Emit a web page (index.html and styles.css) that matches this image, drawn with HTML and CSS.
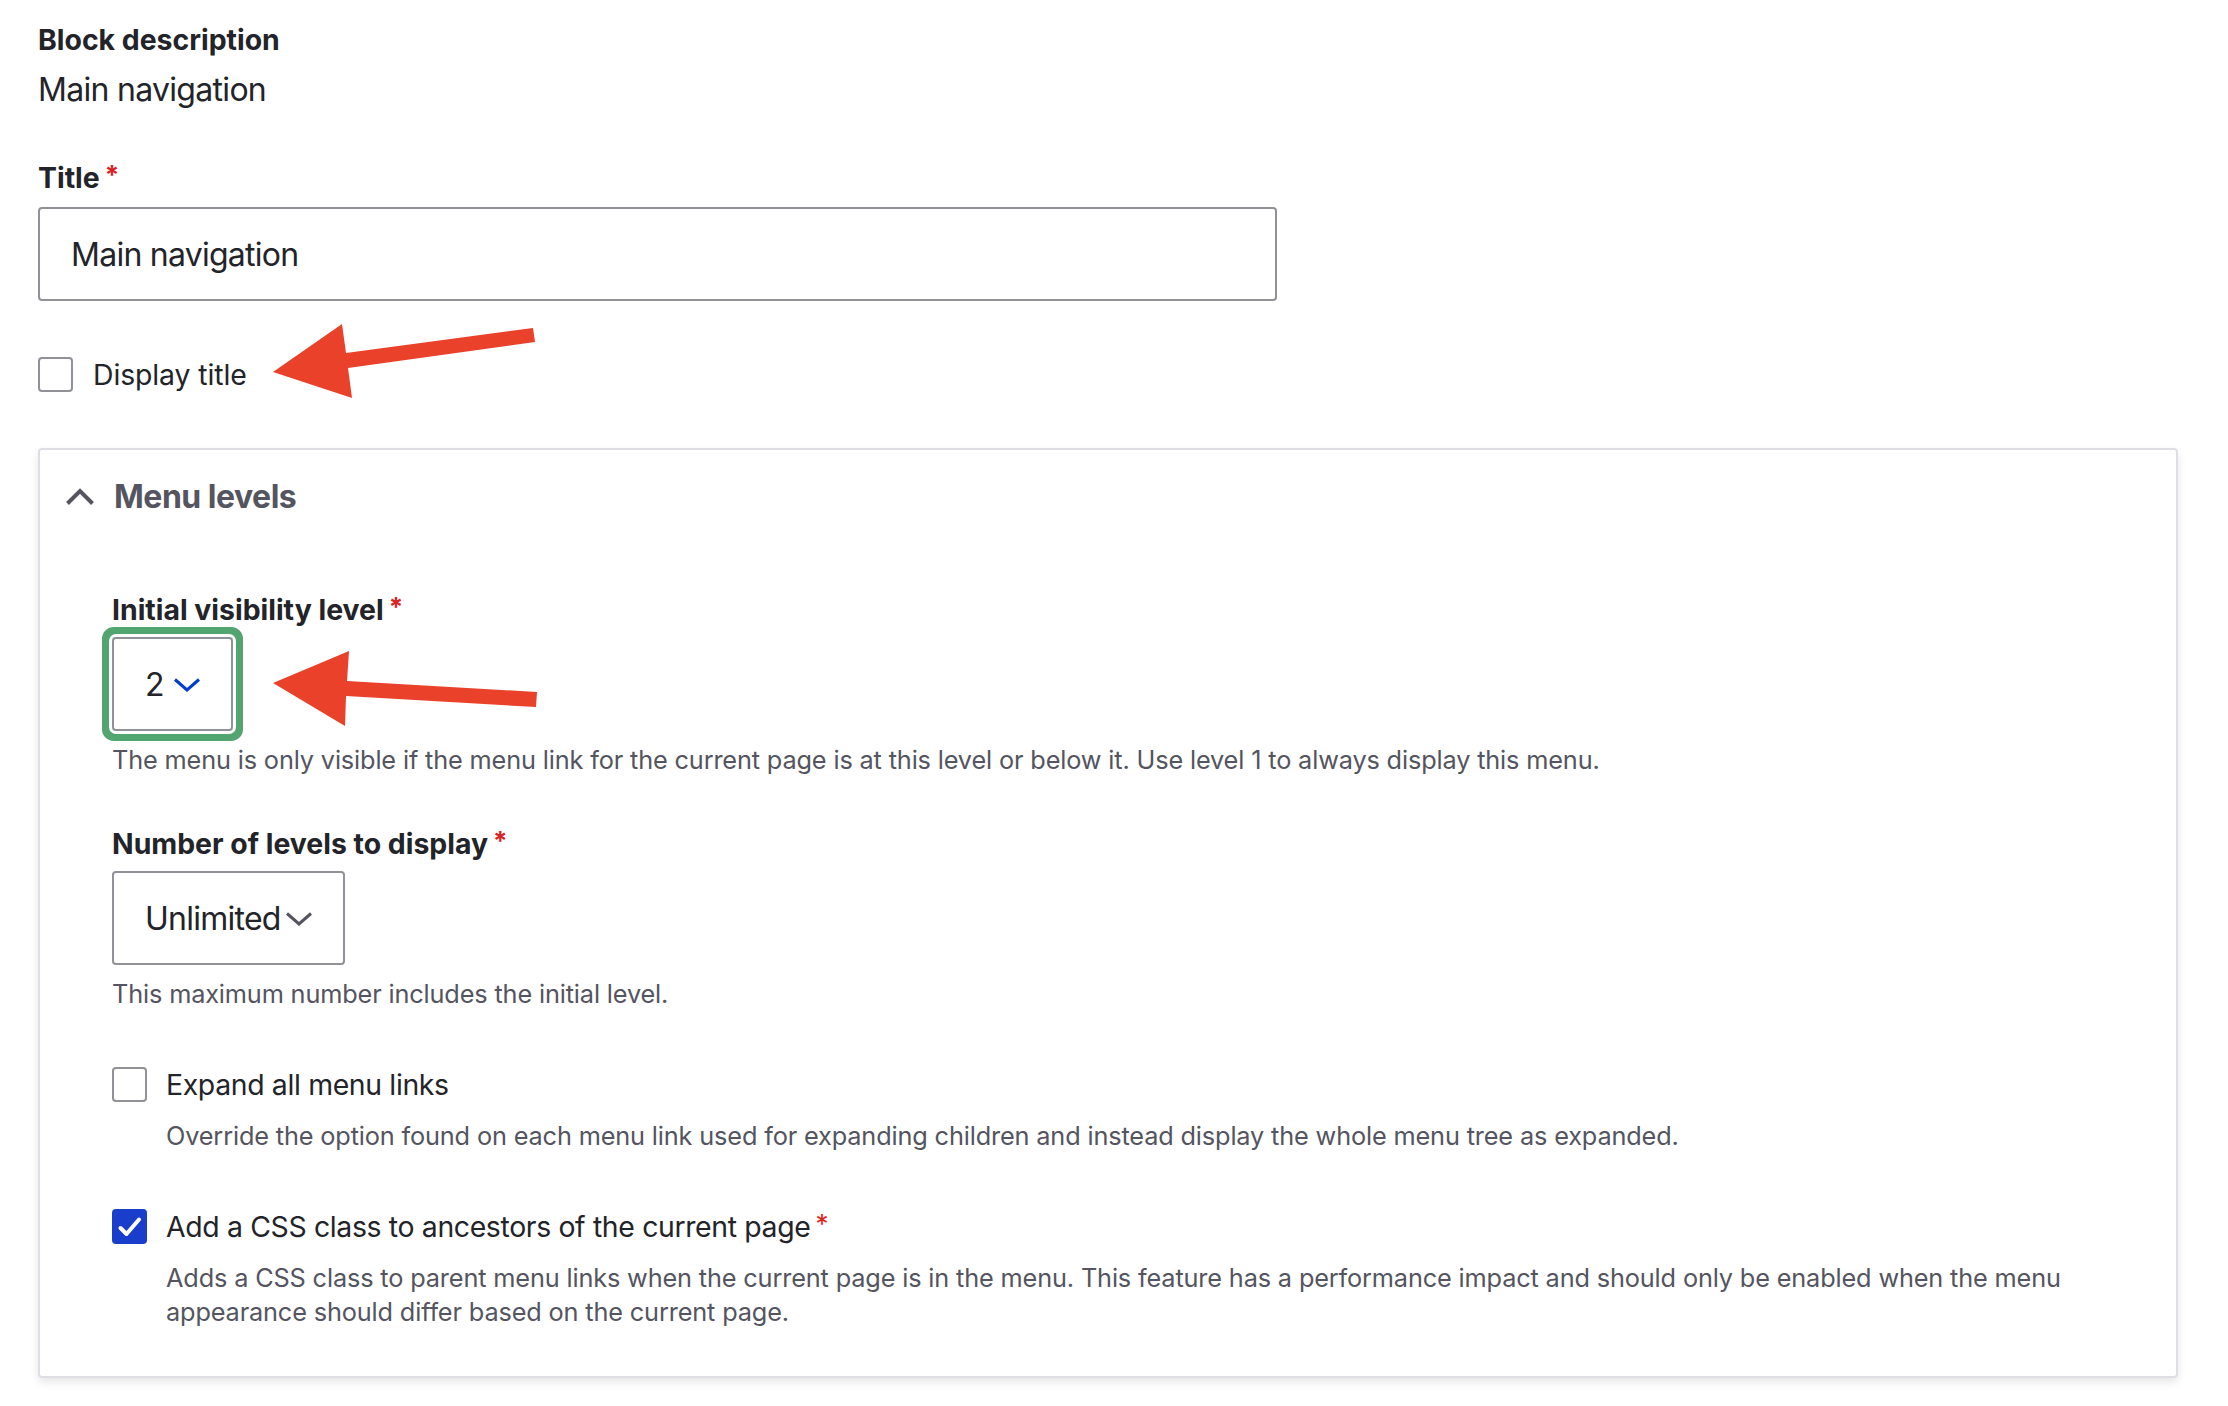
FILE: index.html
```html
<!DOCTYPE html>
<html lang="en">
<head>
  <meta charset="UTF-8" />
  <meta name="viewport" content="width=device-width, initial-scale=1" />
  <title>Configure block</title>
  <link rel="stylesheet" href="styles.css">
</head>
<body>
  <div class="page">

    <div class="form-item">
      <div class="form-item__label">Block description</div>
      <div class="form-item__value">Main navigation</div>
    </div>

    <div class="form-item form-item--title">
      <label class="form-item__label" for="title">Title<span class="required">*</span></label>
      <input type="text" class="form-text" id="title" value="Main navigation" />
    </div>

    <div class="check check--top">
      <span class="check__box"></span>
      <span class="check__label">Display title</span>
    </div>

    <details class="details" open>
      <summary class="details__summary">
        <svg class="details__arrow" width="28" height="18" viewBox="0 0 28 18">
          <path d="M1.5 15.5 L14 3 L26.5 15.5" fill="none" stroke="#545560" stroke-width="4" />
        </svg>
        Menu levels
      </summary>

      <div class="details__content">
        <div class="form-item form-item--first">
          <div class="form-item__label">Initial visibility level<span class="required">*</span></div>
          <div class="select select--focus">
            <span>2</span>
            <svg width="26" height="14" viewBox="0 0 26 14">
              <path d="M1 1.5 L13 12 L25 1.5" fill="none" stroke="#003ecc" stroke-width="3" />
            </svg>
          </div>
          <div class="form-item__description">The menu is only visible if the menu link for the current page is at this level or below it. Use level 1 to always display this menu.</div>
        </div>

        <div class="form-item form-item--next">
          <div class="form-item__label">Number of levels to display<span class="required">*</span></div>
          <div class="select select--wide">
            <span>Unlimited</span>
            <svg width="26" height="14" viewBox="0 0 26 14">
              <path d="M1 1.5 L13 12 L25 1.5" fill="none" stroke="#545560" stroke-width="3" />
            </svg>
          </div>
          <div class="form-item__description">This maximum number includes the initial level.</div>
        </div>

        <div class="check">
          <span class="check__box"></span>
          <span class="check__label">Expand all menu links</span>
        </div>
        <div class="form-item__description check__description">Override the option found on each menu link used for expanding children and instead display the whole menu tree as expanded.</div>

        <div class="check">
          <span class="check__box check__box--checked">
            <svg width="35" height="35" viewBox="0 0 35 35">
              <path d="M8.5 19 L14.5 25 L27 10.5" fill="none" stroke="#fff" stroke-width="4" stroke-linecap="round" stroke-linejoin="round" />
            </svg>
          </span>
          <span class="check__label">Add a CSS class to ancestors of the current page<span class="required">*</span></span>
        </div>
        <div class="form-item__description check__description">Adds a CSS class to parent menu links when the current page is in the menu. This feature has a performance impact and should only be enabled when the menu appearance should differ based on the current page.</div>
      </div>
    </details>

    <!-- red pointers drawn on top of the form -->
    <svg class="pointers" width="2228" height="1406" viewBox="0 0 2228 1406">
      <polygon points="273,372 342,324 346,353 533,328 535,342 348,368 352,398" fill="#e9412a" />
      <polygon points="273,683 349,651 347,681 537,692 536,707 346,696 345,726" fill="#e9412a" />
    </svg>
  </div>
</body>
</html>
```

FILE: styles.css
```css
body {
  margin: 0;
  background: #fff;
  color: #232429;
  font-family: Inter, "Liberation Sans", sans-serif;
}
.page {
  position: relative;
  padding: 22px 50px 40px 38px;
}
.form-item__label {
  display: block;
  font-size: 28.4px;
  line-height: 36px;
  font-weight: 700;
}
.form-item__value {
  margin-top: 10px;
  font-size: 32px;
  line-height: 44px;
  letter-spacing: -0.7px;
}
.form-item__description {
  margin-top: 12px;
  color: #545560;
  font-size: 25.3px;
  line-height: 34px;
  letter-spacing: -0.15px;
}
.required {
  margin-left: 5px;
  color: #dc2323;
  font-size: 26px;
  line-height: 0;
  letter-spacing: 0;
  vertical-align: 4px;
}
.form-item--title {
  margin-top: 48px;
}
.form-text {
  display: block;
  box-sizing: border-box;
  margin: 11px 0 0;
  width: 1239px;
  height: 94px;
  padding: 0 31px;
  border: 2px solid #919297;
  border-radius: 4px;
  font-family: inherit;
  font-size: 32px;
  letter-spacing: -0.75px;
  color: #232429;
  outline: none;
}

/* checkboxes */
.check {
  display: flex;
  align-items: flex-start;
  margin-top: 56px;
}
.check__box {
  flex: none;
  box-sizing: border-box;
  width: 35px;
  height: 35px;
  border: 2px solid #919297;
  border-radius: 4px;
}
.check__box--checked {
  border: none;
  background: #1a3ecc;
}
.check__box--checked svg {
  display: block;
}
.check__label {
  margin-left: 19px;
  font-size: 28.4px;
  line-height: 36px;
  letter-spacing: -0.35px;
}
.check--top .check__label {
  margin-left: 20px;
  letter-spacing: -0.1px;
}
.check__description {
  margin-top: 16px;
  padding-left: 54px;
}

/* collapsible group */
.details {
  margin-top: 55px;
  padding: 0 72px 47px 0;
  border: 2px solid #dedfe4;
  border-radius: 4px;
  box-shadow: 0 4px 8px rgba(0, 0, 0, 0.1);
}
.details__summary {
  display: flex;
  align-items: center;
  padding: 25px 0 0 26px;
  list-style: none;
  color: #545560;
  font-size: 32px;
  line-height: 44px;
  font-weight: 700;
  letter-spacing: -0.5px;
}
.details__summary::-webkit-details-marker {
  display: none;
}
.details__arrow {
  margin-right: 20px;
}
.details__content {
  padding-left: 72px;
}
.form-item--first {
  margin-top: 73px;
}
.form-item--next {
  margin-top: 49px;
}

/* selects */
.select {
  display: flex;
  align-items: center;
  justify-content: space-between;
  box-sizing: border-box;
  margin-top: 9px;
  width: 121px;
  height: 94px;
  padding: 0 31px;
  border: 2px solid #919297;
  border-radius: 4px;
  font-size: 32px;
  letter-spacing: -0.75px;
}
.select--focus {
  box-shadow: 0 0 0 3px #fff, 0 0 0 10px #52a56f;
}
.select--wide {
  width: 233px;
}
.select svg {
  display: block;
  margin-top: 2px;
}

.pointers {
  position: absolute;
  top: 0;
  left: 0;
  pointer-events: none;
}
```
